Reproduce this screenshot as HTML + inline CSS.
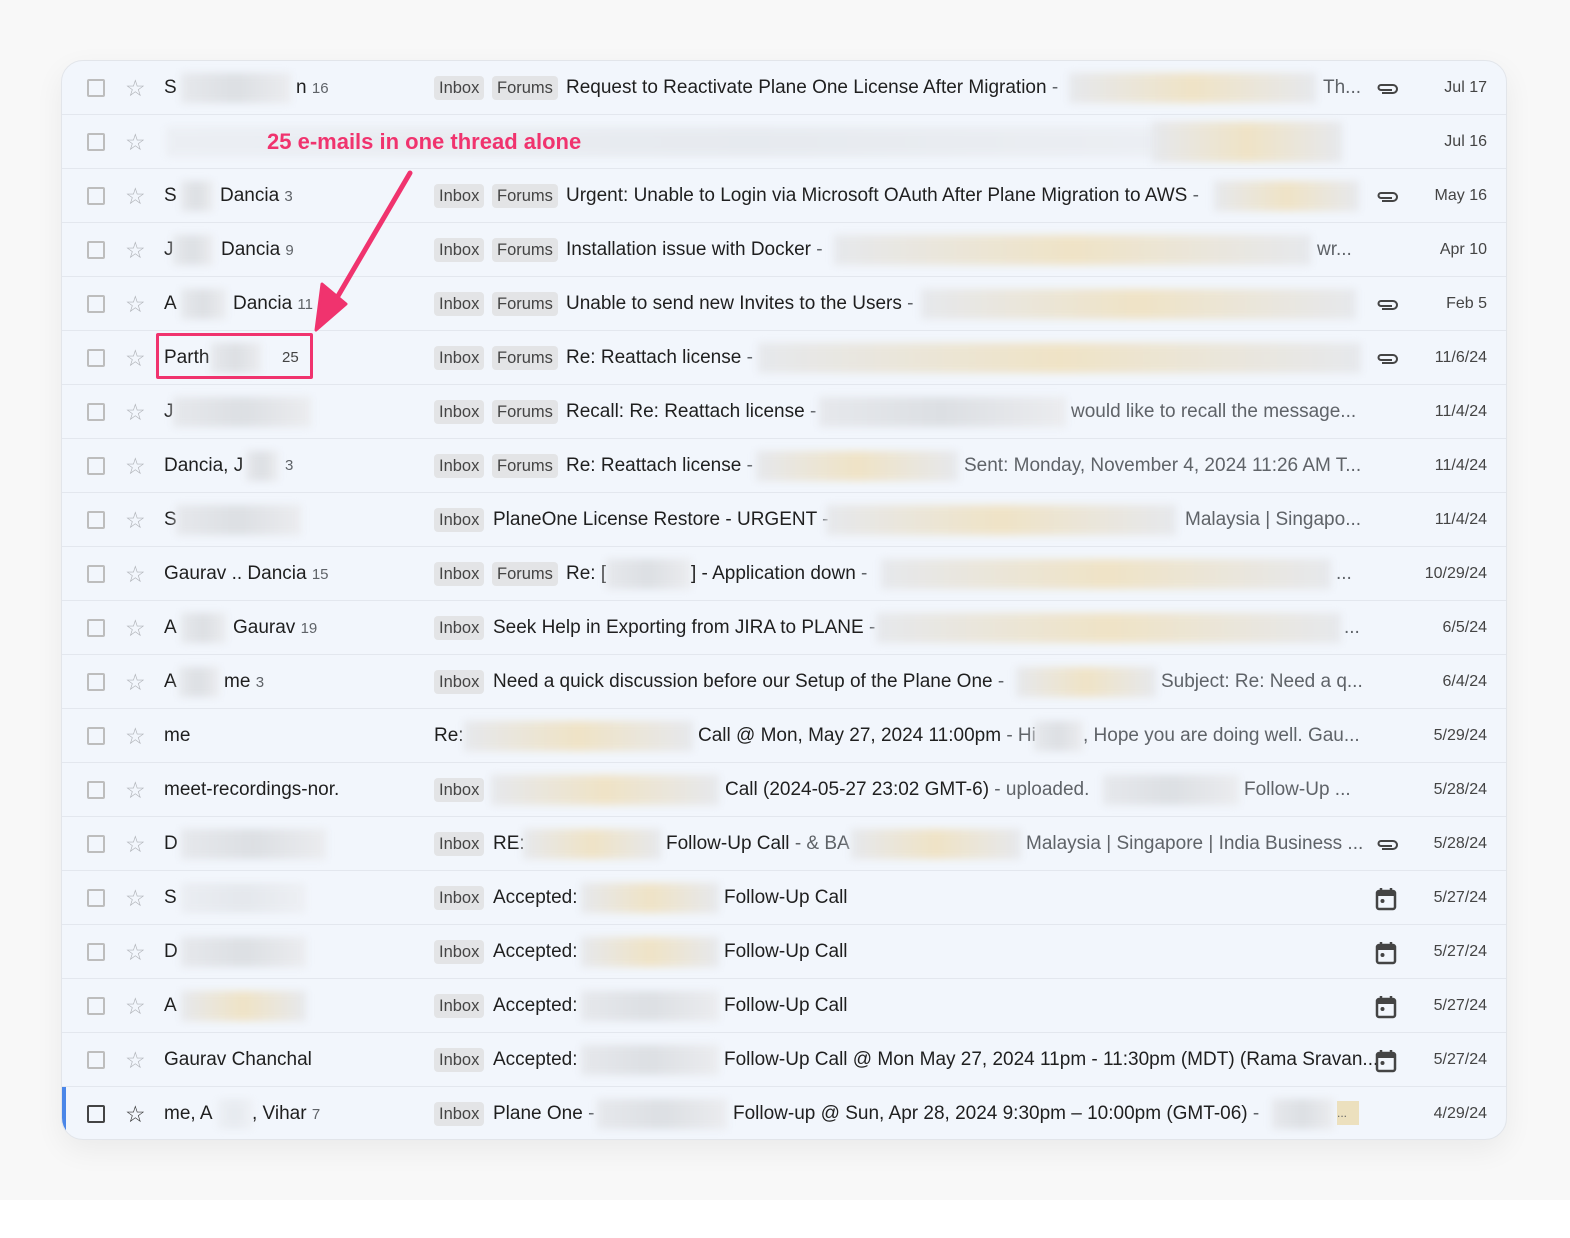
<!DOCTYPE html>
<html><head><meta charset="utf-8"><style>
*{margin:0;padding:0;box-sizing:border-box}
body{width:1570px;height:1238px;background:#fff;font-family:"Liberation Sans",Arial,sans-serif;position:relative;overflow:hidden}
.bg{position:absolute;left:0;top:0;width:1570px;height:1200px;background:#f8f8f8}
.card{position:absolute;left:61px;top:60px;width:1446px;height:1080px;background:#f2f6fc;border-radius:22px;border:1px solid #e2e5ea;box-shadow:0 10px 30px rgba(0,0,0,0.06);overflow:hidden}
.r{position:absolute;left:0;width:1446px;height:54px;border-bottom:1px solid #e3e7ee;font-size:19px;color:#1f1f1f}
.r>*{position:absolute;top:0;line-height:54px;white-space:nowrap}
.cb{left:25px;top:18px!important;width:18px;height:18px;border:2px solid #bdbdbd;border-radius:2px}
.st{left:63px;font-size:23px;color:#b0b3b8;line-height:54px!important}
.t{top:15px!important;line-height:24px!important;font-size:16.5px;color:#444;background:#e3e4e6;border-radius:4px;padding:0 5px}
.g{color:#5f6368}
.n{font-size:15px;color:#5f6368}
.d{right:21px;left:auto!important;font-size:16px;color:#444}
.b{top:12px!important;height:30px;background:linear-gradient(90deg,#e6e8ec,#dcdfe3,#ebecef);filter:blur(4px)}
.y{top:12px!important;height:30px;background:linear-gradient(90deg,#e6e8ec,#efe3c6,#e6e8ec);filter:blur(4px)}
.ic{left:1313px;top:16px!important}
</style></head><body>
<div class="bg"></div>
<div class="card">
<div class="r" style="top:0"><div class="cb"></div><span class="st">☆</span><span style="left:102px">S</span><div class="b" style="left:119px;width:110px"></div><span style="left:234px">n <span class="n">16</span></span>
<span class="t" style="left:372px">Inbox</span><span class="t" style="left:430px">Forums</span><span style="left:504px">Request to Reactivate Plane One License After Migration <span class="g">-</span></span>
<div class="y" style="left:1007px;width:247px"></div><span class="g" style="left:1261px">Th...</span>
<svg class="ic" width="24" height="22" viewBox="0 0 24 22"><path d="M7 16h11a4 4 0 0 0 0-8H6a2.5 2.5 0 0 0 0 5h11" fill="none" stroke="#444" stroke-width="2"/></svg><span class="d">Jul 17</span></div>
<div class="r" style="top:54px"><div class="cb"></div><span class="st">☆</span><div class="b" style="left:104px;width:1170px;opacity:.5"></div><div class="y" style="left:1090px;width:190px;height:40px;top:7px!important"></div>
<span style="left:205px;color:#f0336e;font-weight:bold;font-size:22px">25 e-mails in one thread alone</span><span class="d">Jul 16</span></div>
<div class="r" style="top:108px"><div class="cb"></div><span class="st">☆</span><span style="left:102px">S</span><div class="b" style="left:119px;width:32px"></div><span style="left:158px">Dancia <span class="n">3</span></span>
<span class="t" style="left:372px">Inbox</span><span class="t" style="left:430px">Forums</span><span style="left:504px">Urgent: Unable to Login via Microsoft OAuth After Plane Migration to AWS <span class="g">-</span></span>
<div class="y" style="left:1152px;width:145px"></div>
<svg class="ic" width="24" height="22" viewBox="0 0 24 22"><path d="M7 16h11a4 4 0 0 0 0-8H6a2.5 2.5 0 0 0 0 5h11" fill="none" stroke="#444" stroke-width="2"/></svg><span class="d">May 16</span></div>
<div class="r" style="top:162px"><div class="cb"></div><span class="st">☆</span><span style="left:102px">J</span><div class="b" style="left:111px;width:40px"></div><span style="left:159px">Dancia <span class="n">9</span></span>
<span class="t" style="left:372px">Inbox</span><span class="t" style="left:430px">Forums</span><span style="left:504px">Installation issue with Docker <span class="g">-</span></span>
<div class="y" style="left:772px;width:477px"></div><span class="g" style="left:1255px">wr...</span><span class="d">Apr 10</span></div>
<div class="r" style="top:216px"><div class="cb"></div><span class="st">☆</span><span style="left:102px">A</span><div class="b" style="left:119px;width:45px"></div><span style="left:171px">Dancia <span class="n">11</span></span>
<span class="t" style="left:372px">Inbox</span><span class="t" style="left:430px">Forums</span><span style="left:504px">Unable to send new Invites to the Users <span class="g">-</span></span>
<div class="y" style="left:859px;width:435px"></div>
<svg class="ic" width="24" height="22" viewBox="0 0 24 22"><path d="M7 16h11a4 4 0 0 0 0-8H6a2.5 2.5 0 0 0 0 5h11" fill="none" stroke="#444" stroke-width="2"/></svg><span class="d">Feb 5</span></div>
<div class="r" style="top:270px"><div class="cb"></div><span class="st">☆</span><span style="left:102px">Parth</span><div class="b" style="left:149px;width:50px"></div><span class="n" style="left:220px;color:#444">25</span>
<div style="left:94px;top:2px;width:157px;height:46px;border:3px solid #f0336e;border-radius:2px"></div>
<span class="t" style="left:372px">Inbox</span><span class="t" style="left:430px">Forums</span><span style="left:504px">Re: Reattach license <span class="g">-</span></span>
<div class="y" style="left:696px;width:603px"></div>
<svg class="ic" width="24" height="22" viewBox="0 0 24 22"><path d="M7 16h11a4 4 0 0 0 0-8H6a2.5 2.5 0 0 0 0 5h11" fill="none" stroke="#444" stroke-width="2"/></svg><span class="d">11/6/24</span></div>
<div class="r" style="top:324px"><div class="cb"></div><span class="st">☆</span><span style="left:102px">J</span><div class="b" style="left:111px;width:138px"></div>
<span class="t" style="left:372px">Inbox</span><span class="t" style="left:430px">Forums</span><span style="left:504px">Recall: Re: Reattach license <span class="g">-</span></span>
<div class="b" style="left:757px;width:247px"></div><span class="g" style="left:1009px">would like to recall the message...</span><span class="d">11/4/24</span></div>
<div class="r" style="top:378px"><div class="cb"></div><span class="st">☆</span><span style="left:102px">Dancia, J</span><div class="b" style="left:184px;width:32px"></div><span class="n" style="left:223px">3</span>
<span class="t" style="left:372px">Inbox</span><span class="t" style="left:430px">Forums</span><span style="left:504px">Re: Reattach license <span class="g">-</span></span>
<div class="y" style="left:694px;width:202px"></div><span class="g" style="left:902px">Sent: Monday, November 4, 2024 11:26 AM T...</span><span class="d">11/4/24</span></div>
<div class="r" style="top:432px"><div class="cb"></div><span class="st">☆</span><span style="left:102px">S</span><div class="b" style="left:114px;width:125px"></div>
<span class="t" style="left:372px">Inbox</span><span style="left:431px">PlaneOne License Restore - URGENT <span class="g">-</span></span>
<div class="y" style="left:764px;width:350px"></div><span class="g" style="left:1123px">Malaysia | Singapo...</span><span class="d">11/4/24</span></div>
<div class="r" style="top:486px"><div class="cb"></div><span class="st">☆</span><span style="left:102px">Gaurav .. Dancia <span class="n">15</span></span>
<span class="t" style="left:372px">Inbox</span><span class="t" style="left:430px">Forums</span><span style="left:504px">Re: [</span><div class="b" style="left:544px;width:85px"></div><span style="left:629px">] - Application down <span class="g">-</span></span>
<div class="y" style="left:819px;width:450px"></div><span class="g" style="left:1274px">...</span><span class="d">10/29/24</span></div>
<div class="r" style="top:540px"><div class="cb"></div><span class="st">☆</span><span style="left:102px">A</span><div class="b" style="left:119px;width:45px"></div><span style="left:171px">Gaurav <span class="n">19</span></span>
<span class="t" style="left:372px">Inbox</span><span style="left:431px">Seek Help in Exporting from JIRA to PLANE <span class="g">-</span></span>
<div class="y" style="left:814px;width:465px"></div><span class="g" style="left:1282px">...</span><span class="d">6/5/24</span></div>
<div class="r" style="top:594px"><div class="cb"></div><span class="st">☆</span><span style="left:102px">A</span><div class="b" style="left:117px;width:40px"></div><span style="left:162px">me <span class="n">3</span></span>
<span class="t" style="left:372px">Inbox</span><span style="left:431px">Need a quick discussion before our Setup of the Plane One <span class="g">-</span></span>
<div class="y" style="left:954px;width:140px"></div><span class="g" style="left:1099px">Subject: Re: Need a q...</span><span class="d">6/4/24</span></div>
<div class="r" style="top:648px"><div class="cb"></div><span class="st">☆</span><span style="left:102px">me</span>
<span style="left:372px">Re:</span><div class="y" style="left:402px;width:229px"></div><span style="left:636px">Call @ Mon, May 27, 2024 11:00pm <span class="g">- Hi</span></span>
<div class="b" style="left:972px;width:49px"></div><span class="g" style="left:1021px">, Hope you are doing well. Gau...</span><span class="d">5/29/24</span></div>
<div class="r" style="top:702px"><div class="cb"></div><span class="st">☆</span><span style="left:102px">meet-recordings-nor.</span>
<span class="t" style="left:372px">Inbox</span><div class="y" style="left:429px;width:228px"></div><span style="left:663px">Call (2024-05-27 23:02 GMT-6) <span class="g">- uploaded.</span></span>
<div class="b" style="left:1041px;width:136px"></div><span class="g" style="left:1182px">Follow-Up ...</span><span class="d">5/28/24</span></div>
<div class="r" style="top:756px"><div class="cb"></div><span class="st">☆</span><span style="left:102px">D</span><div class="b" style="left:119px;width:145px"></div>
<span class="t" style="left:372px">Inbox</span><span style="left:431px">RE:</span><div class="y" style="left:461px;width:138px"></div><span style="left:604px">Follow-Up Call <span class="g">- &amp; BA</span></span>
<div class="y" style="left:789px;width:170px"></div><span class="g" style="left:964px">Malaysia | Singapore | India Business ...</span>
<svg class="ic" width="24" height="22" viewBox="0 0 24 22"><path d="M7 16h11a4 4 0 0 0 0-8H6a2.5 2.5 0 0 0 0 5h11" fill="none" stroke="#444" stroke-width="2"/></svg><span class="d">5/28/24</span></div>
<div class="r" style="top:810px"><div class="cb"></div><span class="st">☆</span><span style="left:102px">S</span><div class="b" style="left:119px;width:125px;opacity:.6"></div>
<span class="t" style="left:372px">Inbox</span><span style="left:431px">Accepted:</span><div class="y" style="left:519px;width:138px"></div><span style="left:662px">Follow-Up Call</span>
<svg class="ic" width="22" height="24" viewBox="0 0 22 24"><rect x="2" y="4" width="18" height="18" rx="2" fill="none" stroke="#444" stroke-width="2.5"/><rect x="2" y="4" width="18" height="5" fill="#444"/><path d="M6 1v4M16 1v4" stroke="#444" stroke-width="2.5"/><circle cx="7.5" cy="14" r="2" fill="#444"/></svg><span class="d">5/27/24</span></div>
<div class="r" style="top:864px"><div class="cb"></div><span class="st">☆</span><span style="left:102px">D</span><div class="b" style="left:119px;width:125px"></div>
<span class="t" style="left:372px">Inbox</span><span style="left:431px">Accepted:</span><div class="y" style="left:519px;width:138px"></div><span style="left:662px">Follow-Up Call</span>
<svg class="ic" width="22" height="24" viewBox="0 0 22 24"><rect x="2" y="4" width="18" height="18" rx="2" fill="none" stroke="#444" stroke-width="2.5"/><rect x="2" y="4" width="18" height="5" fill="#444"/><path d="M6 1v4M16 1v4" stroke="#444" stroke-width="2.5"/><circle cx="7.5" cy="14" r="2" fill="#444"/></svg><span class="d">5/27/24</span></div>
<div class="r" style="top:918px"><div class="cb"></div><span class="st">☆</span><span style="left:102px">A</span><div class="y" style="left:119px;width:125px"></div>
<span class="t" style="left:372px">Inbox</span><span style="left:431px">Accepted:</span><div class="b" style="left:519px;width:138px"></div><span style="left:662px">Follow-Up Call</span>
<svg class="ic" width="22" height="24" viewBox="0 0 22 24"><rect x="2" y="4" width="18" height="18" rx="2" fill="none" stroke="#444" stroke-width="2.5"/><rect x="2" y="4" width="18" height="5" fill="#444"/><path d="M6 1v4M16 1v4" stroke="#444" stroke-width="2.5"/><circle cx="7.5" cy="14" r="2" fill="#444"/></svg><span class="d">5/27/24</span></div>
<div class="r" style="top:972px"><div class="cb"></div><span class="st">☆</span><span style="left:102px">Gaurav Chanchal</span>
<span class="t" style="left:372px">Inbox</span><span style="left:431px">Accepted:</span><div class="b" style="left:519px;width:138px"></div><span style="left:662px">Follow-Up Call @ Mon May 27, 2024 11pm - 11:30pm (MDT) (Rama Sravan...</span>
<svg class="ic" width="22" height="24" viewBox="0 0 22 24"><rect x="2" y="4" width="18" height="18" rx="2" fill="none" stroke="#444" stroke-width="2.5"/><rect x="2" y="4" width="18" height="5" fill="#444"/><path d="M6 1v4M16 1v4" stroke="#444" stroke-width="2.5"/><circle cx="7.5" cy="14" r="2" fill="#444"/></svg><span class="d">5/27/24</span></div>
<div class="r" style="top:1026px;border-bottom:none;border-left:4px solid #4a86e8"><div class="cb" style="left:21px;border-color:#444"></div><span class="st" style="left:59px;color:#333">☆</span><span style="left:98px">me, A</span><div class="b" style="left:152px;width:35px;opacity:.5"></div><span style="left:186px">, Vihar <span class="n">7</span></span>
<span class="t" style="left:368px">Inbox</span><span style="left:427px">Plane One <span class="g">-</span></span><div class="b" style="left:531px;width:130px"></div><span style="left:667px">Follow-up @ Sun, Apr 28, 2024 9:30pm – 10:00pm (GMT-06) <span class="g">-</span></span>
<div class="b" style="left:1206px;width:62px"></div><div style="left:1271px;top:14px;width:22px;height:24px;background:#ece0be;line-height:24px!important;font-size:12px;color:#666">...</div><span class="d">4/29/24</span></div>
</div>
<svg style="position:absolute;left:0;top:0" width="1570" height="1238"><path d="M410 173 L338 296" stroke="#f0336e" stroke-width="5" stroke-linecap="round"/><path d="M316 330 L322 284 L346 304 Z" fill="#f0336e" stroke="#f0336e" stroke-width="3" stroke-linejoin="round"/></svg>
</body></html>
